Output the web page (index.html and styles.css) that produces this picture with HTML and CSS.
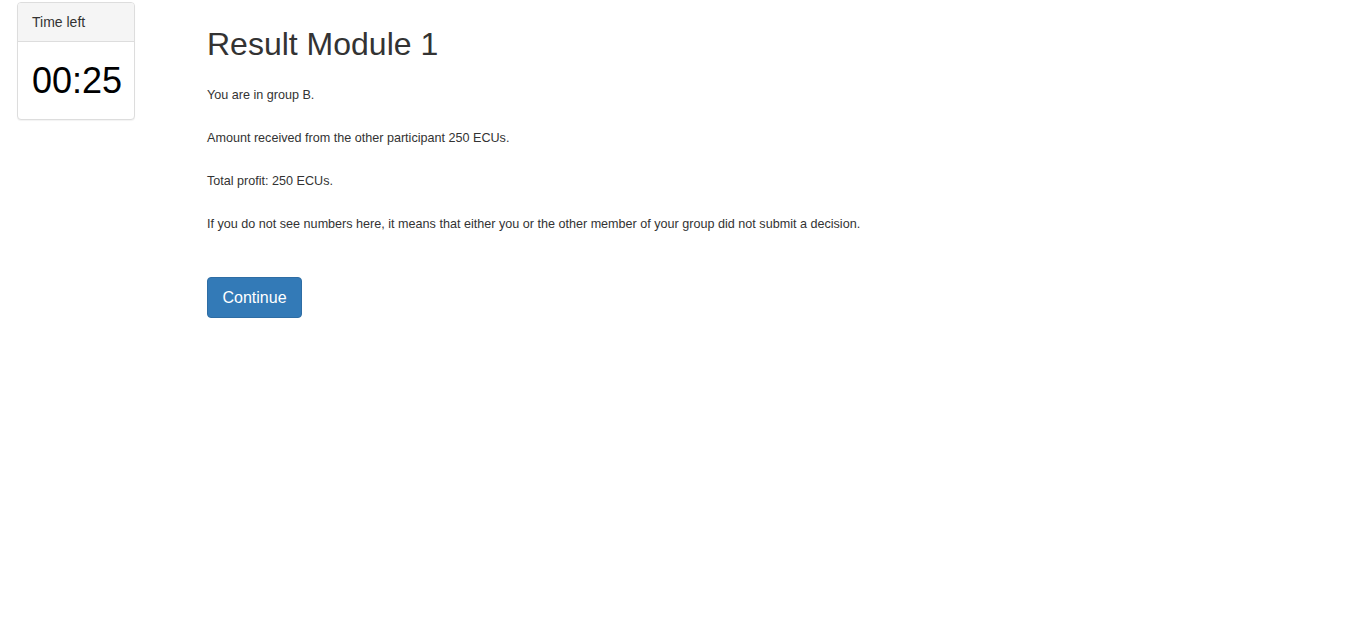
FILE: index.html
```html
<!DOCTYPE html>
<html>
<head>
<meta charset="utf-8">
<link rel="stylesheet" href="styles.css">
</head>
<body>
<div class="page">
  <aside class="timer">
    <div class="timer-head">Time left</div>
    <div class="timer-body">00:25</div>
  </aside>
  <main class="content">
    <h2 class="title">Result Module 1</h2>
    <p class="line">You are in group B.</p>
    <p class="line">Amount received from the other participant 250 ECUs.</p>
    <p class="line">Total profit: 250 ECUs.</p>
    <p class="line">If you do not see numbers here, it means that either you or the other member of your group did not submit a decision.</p>
    <button class="btn">Continue</button>
  </main>
</div>
</body>
</html>
```
FILE: styles.css
```css
html, body {
  margin: 0;
  padding: 0;
  background: #fff;
}
body {
  font-family: "Liberation Sans", Arial, sans-serif;
  font-size: 14px;
  line-height: 1.42857;
  color: #333;
}
.page {
  display: flex;
  align-items: flex-start;
  padding: 2px 0 0 17px;
}
.timer {
  width: 118px;
  box-sizing: border-box;
  border: 1px solid #ddd;
  border-radius: 4px;
  background: #fff;
  box-shadow: 0 1px 1px rgba(0,0,0,0.05);
}
.timer-head {
  background: #f5f5f5;
  border-bottom: 1px solid #ddd;
  border-radius: 3px 3px 0 0;
  padding: 9px 14px;
  font-size: 14px;
  line-height: 20px;
  color: #333;
}
.timer-body {
  padding: 15px 0 15px 14px;
  font-size: 36px;
  line-height: 47px;
  color: #000;
}
.content {
  margin-left: 72px;
}
.title {
  margin: 25px 0 25px;
  font-size: 32px;
  font-weight: 500;
  line-height: 1.1;
  color: #333;
}
.line {
  margin: 0 0 26px;
  font-size: 12.6px;
  line-height: 17px;
  color: #333;
}
.btn {
  margin-top: 18px;
  font-family: "Liberation Sans", Arial, sans-serif;
  font-size: 16px;
  line-height: 23px;
  padding: 8px 14.5px;
  color: #fff;
  background: #337ab7;
  border: 1px solid #2e6da4;
  border-radius: 4px;
  cursor: pointer;
}
```
